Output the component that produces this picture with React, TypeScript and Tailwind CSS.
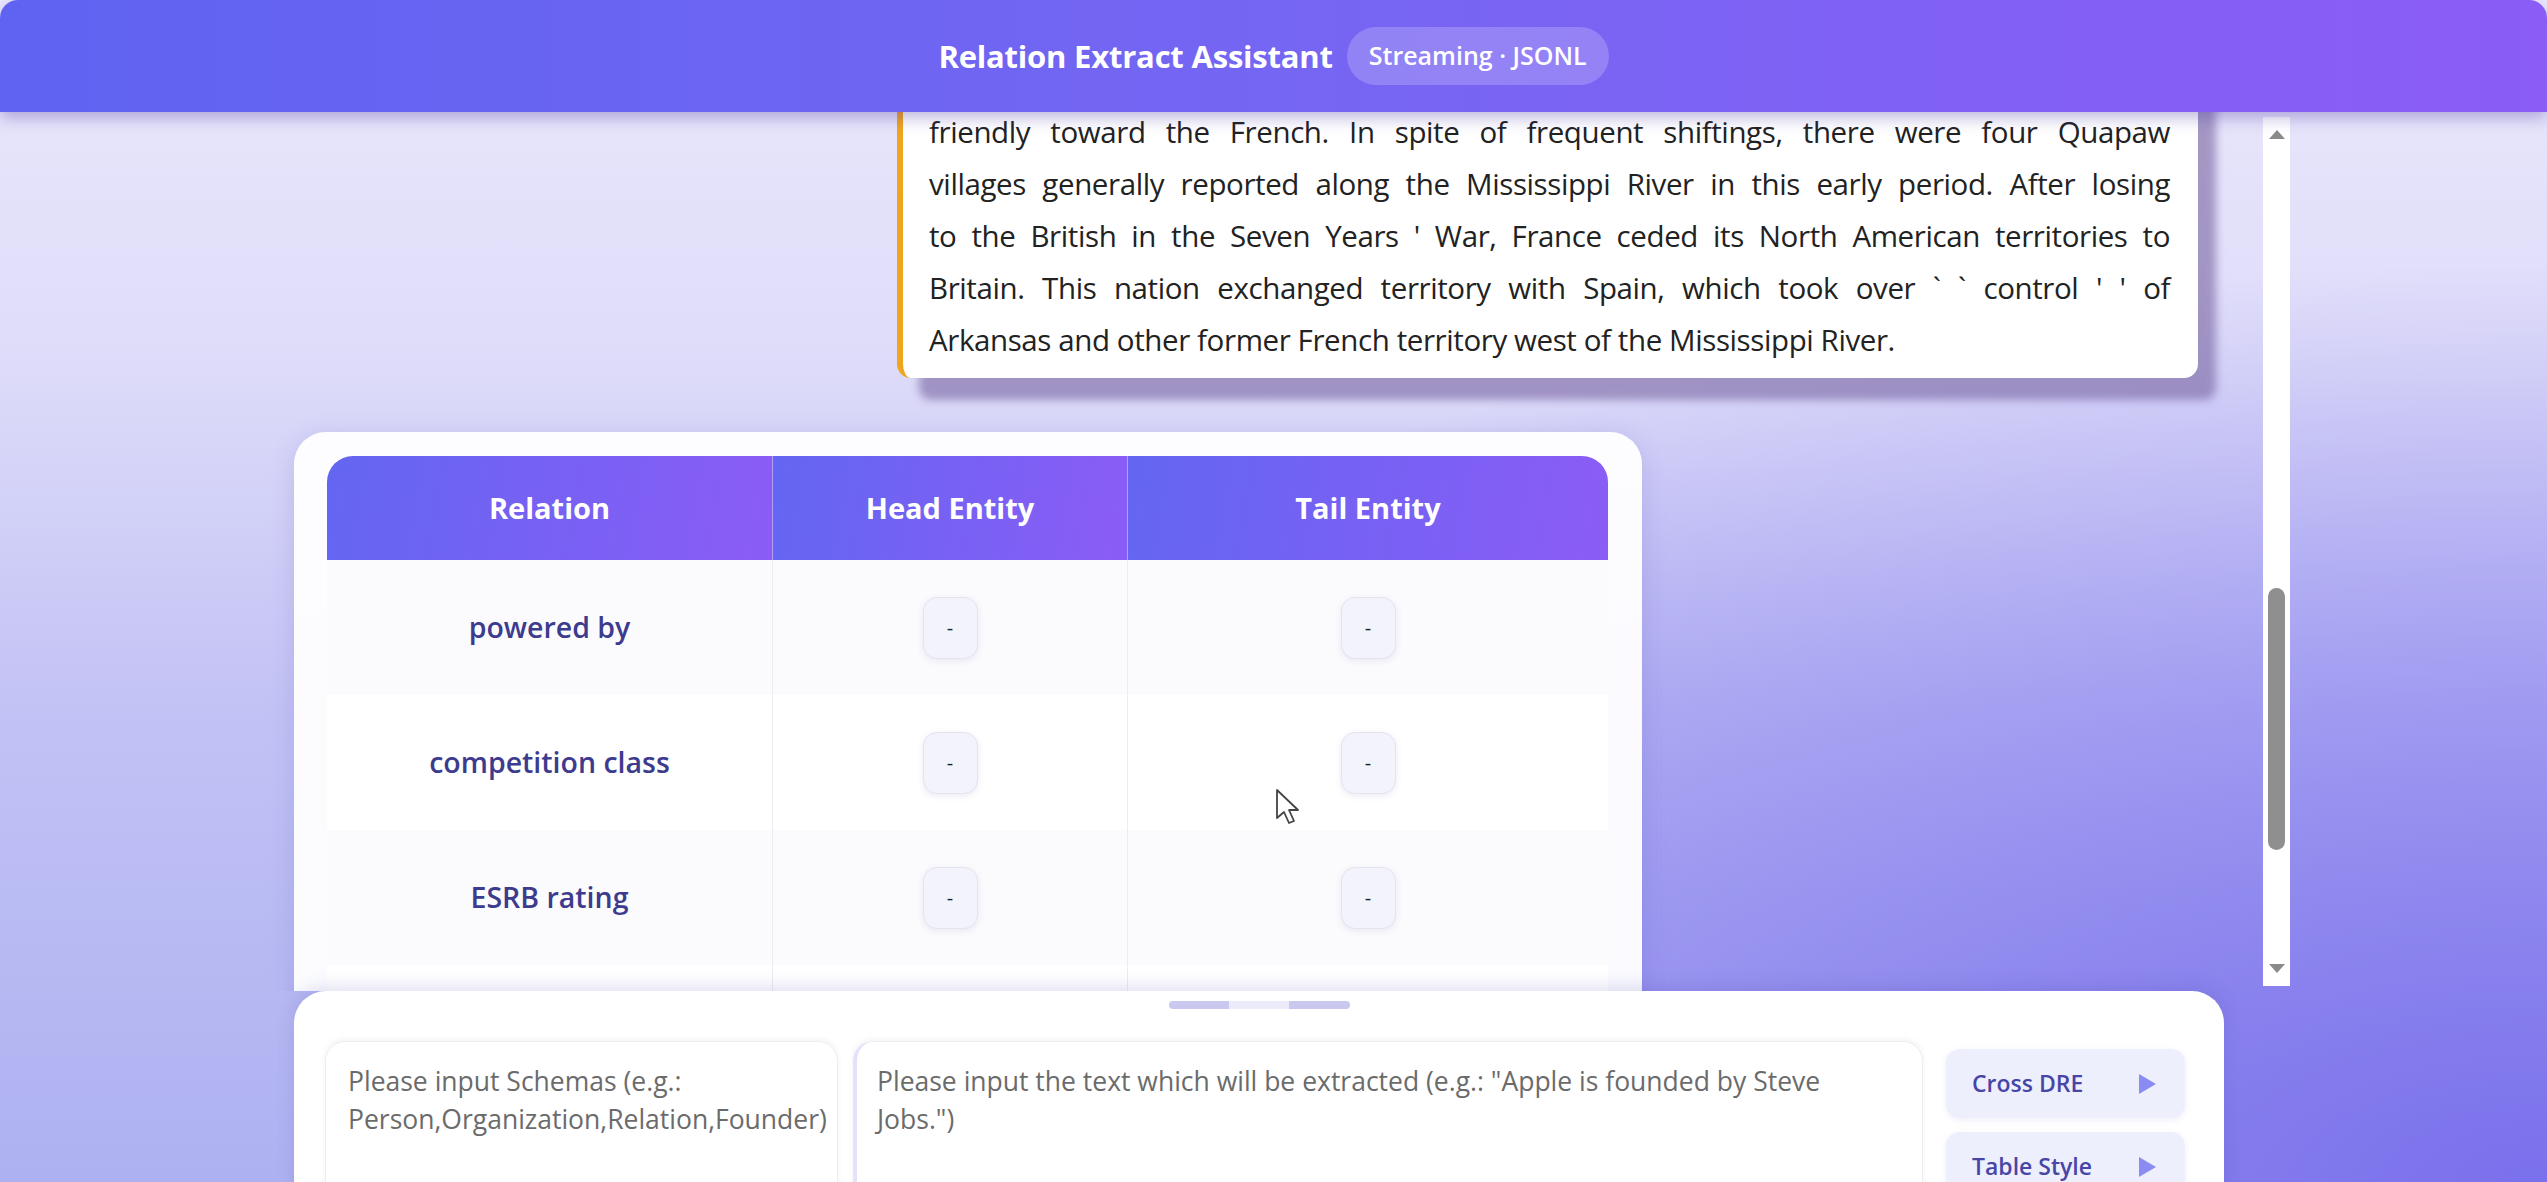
import React from 'react';

const font = { fontFamily: '"Open Sans", "Noto Sans", sans-serif' };

const paragraph = [
  'friendly toward the French. In spite of frequent shiftings, there were four Quapaw',
  'villages generally reported along the Mississippi River in this early period. After losing',
  "to the British in the Seven Years ' War, France ceded its North American territories to",
  "Britain. This nation exchanged territory with Spain, which took over ` ` control ' ' of",
  'Arkansas and other former French territory west of the Mississippi River.',
];

const relations = ['powered by', 'competition class', 'ESRB rating', ''];

function Dash() {
  return (
    <div className="w-[55px] h-[62px] rounded-[14px] bg-[#f3f3fb] border border-[#e4e4f1] shadow-[0_2px_6px_rgba(90,90,160,0.12)] flex items-center justify-center text-[20px] font-medium text-[#222]">
      -
    </div>
  );
}

function Play() {
  return (
    <svg width="20" height="22" viewBox="0 0 20 22">
      <path d="M2 1 L19 11 L2 21 Z" fill="#8b8cf1" />
    </svg>
  );
}

export default function App() {
  return (
    <div
      className="w-[2547px] h-[1182px] overflow-hidden flex flex-col bg-[radial-gradient(ellipse_at_100%_100%,#7a70ec_0%,rgba(122,112,236,0)_55%),linear-gradient(180deg,#ebe9fc_0%,#dedcf9_30%,#c2c2f5_60%,#aeb1f1_100%)]"
      style={font}
    >
      {/* Header */}
      <header className="relative z-20 h-[112px] shrink-0 bg-[linear-gradient(90deg,#5f63f1,#7566f3_50%,#8b5cf6)] shadow-[0_6px_16px_rgba(70,50,160,0.35)] flex items-center justify-center gap-[14px] rounded-t-[18px]">
        <h1 className="text-white font-bold text-[31px] tracking-[-0.2px]">Relation Extract Assistant</h1>
        <span className="h-[58px] px-[22px] rounded-full bg-white/20 text-white font-semibold text-[25px] flex items-center">
          Streaming · JSONL
        </span>
      </header>

      {/* Messages */}
      <div className="relative z-0 h-[879px] shrink-0 flex overflow-hidden">
        <div className="ml-[294px] w-[1904px] flex flex-col">
          <div className="self-end w-[1301px] -mt-[40px] bg-white border-l-[6px] border-[#f0a51e] rounded-b-[14px] pl-[26px] pr-[28px] pt-[34px] pb-[12px] shadow-[20px_24px_8px_-2px_rgba(120,100,160,0.6)]">
            {paragraph.map((line, i) => (
              <p
                key={i}
                className={`text-[29.5px] tracking-[-0.4px] leading-[52px] text-[#222] whitespace-nowrap ${i < paragraph.length - 1 ? 'text-justify [text-align-last:justify]' : ''}`}
              >
                {line}
              </p>
            ))}
          </div>

          <div className="mt-[54px] w-[1348px] bg-white/95 rounded-[32px] px-[33px] pt-[24px] shadow-[0_4px_24px_rgba(90,80,180,0.18)]">
            <div className="grid grid-cols-[445px_355px_481px]">
              {['Relation', 'Head Entity', 'Tail Entity'].map((h, i) => (
                <div
                  key={h}
                  className={`h-[104px] flex items-center justify-center text-white font-bold text-[29px] bg-[linear-gradient(100deg,#6366f1,#8b5cf6)] ${i === 0 ? 'rounded-tl-[26px]' : 'border-l border-white/40'} ${i === 2 ? 'rounded-tr-[26px]' : ''}`}
                >
                  {h}
                </div>
              ))}
              {relations.map((r, i) => (
                <React.Fragment key={i}>
                  <div className={`h-[135px] flex items-center justify-center text-[28.5px] font-semibold text-[#3d3b8e] ${i % 2 === 0 ? 'bg-[#fbfbfd]' : 'bg-white'}`}>
                    {r}
                  </div>
                  <div className={`h-[135px] border-l border-[#ececf3] flex items-center justify-center ${i % 2 === 0 ? 'bg-[#fbfbfd]' : 'bg-white'}`}>
                    {r && <Dash />}
                  </div>
                  <div className={`h-[135px] border-l border-[#ececf3] flex items-center justify-center ${i % 2 === 0 ? 'bg-[#fbfbfd]' : 'bg-white'}`}>
                    {r && <Dash />}
                  </div>
                </React.Fragment>
              ))}
            </div>
          </div>
        </div>

        {/* Scrollbar */}
        <div className="ml-[65px] mt-[5px] w-[27px] h-[869px] bg-white flex flex-col items-center pt-[12px] pb-[12px]">
          <svg width="16" height="10" viewBox="0 0 16 10">
            <path d="M0 10 L8 1 L16 10 Z" fill="#8a8a8a" />
          </svg>
          <div className="mt-[449px] w-[17px] h-[262px] rounded-full bg-[#8f8f8f]" />
          <div className="flex-1" />
          <svg width="16" height="10" viewBox="0 0 16 10">
            <path d="M0 0 L8 9 L16 0 Z" fill="#8a8a8a" />
          </svg>
        </div>

        {/* Mouse cursor */}
        <svg className="absolute left-[1275px] top-[676px]" width="26" height="38" viewBox="0 0 26 38">
          <path d="M2 2 L2 30 L9 24 L14 35 L19 33 L14 22 L23 22 Z" fill="#fff" stroke="#444" strokeWidth="1.8" strokeLinejoin="round" />
        </svg>
      </div>

      {/* Bottom input panel */}
      <div className="relative z-10 ml-[294px] w-[1930px] h-[280px] shrink-0 bg-white rounded-t-[32px] shadow-[0_-4px_18px_rgba(80,70,170,0.18)] pt-[10px] px-[31px]">
        <div className="mx-auto w-[181px] h-[8px] rounded-full bg-[#c9c8ee] flex justify-center">
          <div className="w-[60px] h-[8px] bg-[#ecebfb]" />
        </div>
        <div className="mt-[32px] flex">
          <div className="w-[513px] h-[220px] rounded-[20px] border border-[#ececf2] shadow-[0_-2px_6px_rgba(0,0,0,0.05)] pl-[22px] pr-[10px] pt-[20px] text-[26.5px] leading-[38px] text-[#6b6b6b]">
            Please input Schemas (e.g.: Person,Organization,Relation,Founder)
          </div>
          <div className="ml-[15px] w-[1070px] h-[220px] rounded-[20px] border border-[#ececf2] border-l-[4px] border-l-[#e4e2fb] shadow-[0_-2px_6px_rgba(0,0,0,0.05)] px-[20px] pt-[20px] text-[26.5px] leading-[38px] text-[#6b6b6b]">
            Please input the text which will be extracted (e.g.: "Apple is founded by Steve Jobs.")
          </div>
          <div className="ml-[23px] w-[239px] pt-[8px] flex flex-col gap-[14px]">
            {['Cross DRE', 'Table Style'].map((b) => (
              <div key={b} className="h-[69px] rounded-[14px] bg-[#eeeffd] flex items-center justify-between pl-[26px] pr-[28px] shadow-[0_2px_6px_rgba(90,90,200,0.1)]">
                <span className="text-[23px] font-semibold text-[#4746a6]">{b}</span>
                <Play />
              </div>
            ))}
          </div>
        </div>
      </div>
    </div>
  );
}
